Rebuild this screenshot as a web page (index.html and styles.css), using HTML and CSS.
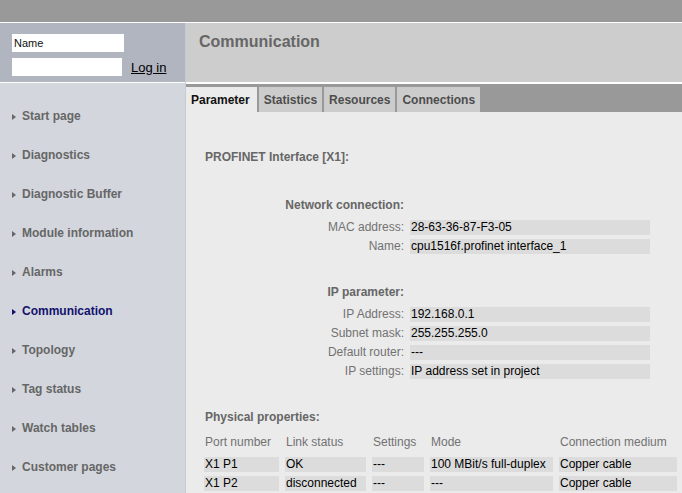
FILE: index.html
```html
<!DOCTYPE html>
<html lang="en">
<head>
<meta charset="utf-8">
<title>Communication</title>
<link rel="stylesheet" href="styles.css">
</head>
<body>
<div class="topbar"></div>
<div class="layout">
  <aside class="sidebar">
    <form class="login">
      <input class="field field-name" type="text" value="Name">
      <div class="login-row">
        <input class="field field-pass" type="password">
        <a href="#" class="login-link">Log in</a>
      </div>
    </form>
    <nav class="nav">
      <a href="#" class="nav-item"><span class="arrow"></span>Start page</a>
      <a href="#" class="nav-item"><span class="arrow"></span>Diagnostics</a>
      <a href="#" class="nav-item"><span class="arrow"></span>Diagnostic Buffer</a>
      <a href="#" class="nav-item"><span class="arrow"></span>Module information</a>
      <a href="#" class="nav-item"><span class="arrow"></span>Alarms</a>
      <a href="#" class="nav-item active"><span class="arrow"></span>Communication</a>
      <a href="#" class="nav-item"><span class="arrow"></span>Topology</a>
      <a href="#" class="nav-item"><span class="arrow"></span>Tag status</a>
      <a href="#" class="nav-item"><span class="arrow"></span>Watch tables</a>
      <a href="#" class="nav-item"><span class="arrow"></span>Customer pages</a>
    </nav>
  </aside>
  <main class="main">
    <header class="pagehead"><h1 class="pagetitle">Communication</h1></header>
    <div class="tabs">
      <span class="tab active">Parameter</span>
      <span class="tab">Statistics</span>
      <span class="tab">Resources</span>
      <span class="tab">Connections</span>
    </div>
    <div class="content">
      <div class="section-title">PROFINET Interface [X1]:</div>

      <div class="group group-net">
        <div class="group-head">Network connection:</div>
        <div class="label">MAC address:</div><div class="value">28-63-36-87-F3-05</div>
        <div class="label">Name:</div><div class="value">cpu1516f.profinet interface_1</div>
      </div>

      <div class="group group-ip">
        <div class="group-head">IP parameter:</div>
        <div class="label">IP Address:</div><div class="value">192.168.0.1</div>
        <div class="label">Subnet mask:</div><div class="value">255.255.255.0</div>
        <div class="label">Default router:</div><div class="value">---</div>
        <div class="label">IP settings:</div><div class="value">IP address set in project</div>
      </div>

      <div class="section-title section-phys">Physical properties:</div>
      <div class="ports">
        <div class="th">Port number</div>
        <div class="th">Link status</div>
        <div class="th">Settings</div>
        <div class="th">Mode</div>
        <div class="th">Connection medium</div>

        <div class="td">X1 P1</div>
        <div class="td">OK</div>
        <div class="td">---</div>
        <div class="td">100 MBit/s full-duplex</div>
        <div class="td">Copper cable</div>

        <div class="td">X1 P2</div>
        <div class="td">disconnected</div>
        <div class="td">---</div>
        <div class="td">---</div>
        <div class="td">Copper cable</div>
      </div>
    </div>
  </main>
</div>
</body>
</html>
```

FILE: styles.css
```css
html, body {
  margin: 0;
  padding: 0;
  height: 100%;
  overflow: hidden;
}

body {
  font-family: "Liberation Sans", Arial, sans-serif;
  font-size: 12px;
  background: #ebebeb;
  display: flex;
  flex-direction: column;
}

.topbar {
  height: 22px;
  background: #999999;
  border-bottom: 1px solid #ffffff;
  flex: none;
}

.layout {
  flex: 1;
  display: flex;
  min-height: 0;
}

/* Sidebar */
.sidebar {
  width: 185px;
  flex: none;
  background: #d3d6dd;
  border-right: 1px solid #c6cad2;
  display: flex;
  flex-direction: column;
}

.login {
  height: 59px;
  flex: none;
  box-sizing: content-box;
  background: #b1b5c0;
  border-bottom: 1px solid #ffffff;
  margin: 0;
  padding: 0;
  display: flex;
  flex-direction: column;
  gap: 6px;
}

.field {
  display: block;
  height: 18px;
  box-sizing: border-box;
  border: none;
  margin: 0;
  padding: 0 2px;
  background: #ffffff;
  font-family: "Liberation Sans", Arial, sans-serif;
  font-size: 11px;
  color: #111111;
  outline: none;
}

.field-name {
  width: 112px;
  margin: 11px 0 0 12px;
}

.field-pass {
  width: 110px;
}

.login-row {
  display: flex;
  align-items: center;
  gap: 9px;
  padding-left: 12px;
}

.login-link {
  font-size: 13px;
  color: #000000;
  text-decoration: underline;
  line-height: 15px;
}

.nav {
  padding-top: 14px;
  display: flex;
  flex-direction: column;
}

.nav-item {
  height: 39px;
  flex: none;
  display: flex;
  align-items: center;
  gap: 6px;
  padding-left: 12px;
  font-weight: bold;
  font-size: 12px;
  line-height: 15px;
  color: #666666;
  text-decoration: none;
}

.arrow {
  width: 0;
  height: 0;
  border-left: 4px solid #666666;
  border-top: 3px solid transparent;
  border-bottom: 3px solid transparent;
  margin-top: 1px;
}

.nav-item.active {
  color: #12126e;
}

.nav-item.active .arrow {
  border-left-color: #12126e;
}

/* Main */
.main {
  flex: 1;
  display: flex;
  flex-direction: column;
  background: #ebebeb;
  min-width: 0;
}

.pagehead {
  height: 59px;
  flex: none;
  box-sizing: content-box;
  background: #cdcdcd;
  border-bottom: 2px solid #ffffff;
  padding: 0;
}

.pagetitle {
  margin: 0;
  padding: 10px 0 0 13px;
  font-size: 16px;
  line-height: 18px;
  font-weight: bold;
  color: #666666;
}

.tabs {
  height: 28px;
  flex: none;
  box-sizing: border-box;
  background: #999999;
  padding-top: 3px;
  display: flex;
  gap: 2px;
}

.tab {
  height: 25px;
  box-sizing: border-box;
  padding: 2px 5px 0 5px;
  line-height: 23px;
  background: #cccccc;
  color: #4d4d4d;
  font-weight: bold;
  font-size: 12px;
}

.tab.active {
  background: #ebebeb;
  color: #111111;
  padding-left: 5px;
  padding-right: 7px;
}

.content {
  padding-top: 38px;
}

.section-title {
  margin-left: 19px;
  line-height: 15px;
  font-weight: bold;
  color: #666666;
}

.group {
  display: grid;
  grid-template-columns: 218px 240px;
  column-gap: 6px;
  row-gap: 4px;
  line-height: 15px;
}

.group-net {
  margin-top: 33px;
}

.group-ip {
  margin-top: 31px;
}

.group-head {
  grid-column: 1;
  text-align: right;
  font-weight: bold;
  color: #666666;
  margin-bottom: 3px;
}

.label {
  grid-column: 1;
  text-align: right;
  color: #727272;
  white-space: nowrap;
}

.value {
  grid-column: 2;
  height: 15px;
  padding-left: 1px;
  background: #dcdcdc;
  color: #000000;
  white-space: nowrap;
}

.section-phys {
  margin-top: 31px;
}

.ports {
  margin: 10px 0 0 18px;
  display: grid;
  grid-template-columns: 75px 81px 52px 123px 118px;
  column-gap: 6px;
  row-gap: 4px;
  line-height: 15px;
}

.th {
  color: #727272;
  padding: 0 0 3px 1px;
  white-space: nowrap;
}

.td {
  height: 15px;
  padding-left: 1px;
  background: #dcdcdc;
  color: #000000;
  white-space: nowrap;
}
```
